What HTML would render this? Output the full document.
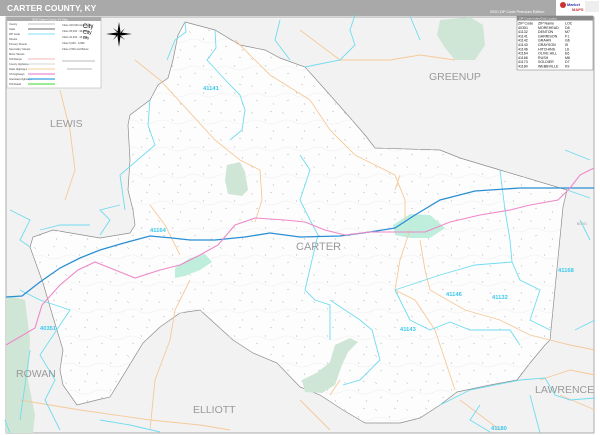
<!DOCTYPE html>
<html><head><meta charset="utf-8"><style>
html,body{margin:0;padding:0;width:600px;height:435px;overflow:hidden;background:#fff;font-family:"Liberation Sans",sans-serif}
</style></head><body>
<svg width="600" height="435" viewBox="0 0 600 435" xmlns="http://www.w3.org/2000/svg" font-family="Liberation Sans, sans-serif">
<rect width="600" height="435" fill="#fff"/>
<rect x="0" y="0" width="600" height="16" fill="#a9a9a9"/>
<text x="7" y="11" font-size="8.5" font-weight="bold" fill="#fff">CARTER COUNTY, KY</text>
<text x="490" y="13" font-size="3.8" fill="#fff">2020 ZIP Code Premium Edition</text>
<rect x="556" y="0" width="44" height="16" fill="#fff"/>
<circle cx="563" cy="5" r="3" fill="#c33"/>
<text x="567" y="6" font-size="4" fill="#33a" font-weight="bold">Market</text>
<text x="572" y="11" font-size="4" fill="#c33" font-weight="bold">MAPS</text>
<rect x="585" y="1" width="14" height="11" fill="#eee"/>
<rect x="6" y="17" width="588" height="416" fill="#f2f2f2" stroke="#999" stroke-width="0.8"/>
<path d="M6,295 L25,300 L30,340 L28,380 L35,415 L33,433 L6,433Z" fill="#cfe6d6"/>
<path d="M440,20 L470,17 L483,25 L485,45 L475,60 L455,60 L445,48 L437,35Z" fill="#cfe6d6"/>
<defs>
<path id="cty" d="M185,22 L215,30 L240,45 L265,50 L280,58 L305,67 L330,95 L352,120 L365,135 L375,148 L440,150 L460,158 L500,170 L567,190 L563,207 L550,340 L545,345 L530,363 L517,380 L490,385 L457,392 L440,405 L420,418 L400,423 L365,423 L343,410 L320,395 L300,387 L277,363 L253,353 L233,340 L200,310 L180,313 L160,327 L143,343 L110,397 L97,400 L77,405 L63,385 L60,370 L63,350 L53,317 L43,283 L30,247 L33,237 L53,230 L100,238 L130,233 L135,225 L133,210 L128,190 L130,160 L128,125 L130,115 L150,100 L158,85 L168,78 L173,60 L178,35Z"/>
<pattern id="rd" width="31" height="27" patternUnits="userSpaceOnUse">
<path d="M3,4 l2,2 M17,11 l1,2 M8,20 l2,-1 M25,22 l1,2 M22,3 l2,1" stroke="#aaa" stroke-width="0.45"/>
<path d="M0,14 q8,-4 15,0 t16,0" stroke="#eee" stroke-width="0.6" fill="none"/>
</pattern></defs>
<use href="#cty" fill="#fdfdfd" stroke="#8c8c8c" stroke-width="0.7"/>
<use href="#cty" fill="url(#rd)"/>
<path d="M227,165 L240,162 L245,172 L248,190 L242,196 L228,194 L225,180Z" fill="#cfe6d6"/>
<path d="M175,268 L190,258 L205,254 L212,262 L200,270 L185,276 L175,278Z" fill="#bfeedd"/>
<path d="M393,225 L410,214 L430,215 L445,228 L430,238 L410,238 L395,235Z" fill="#bfeedd"/>
<path d="M335,345 L350,338 L358,342 L348,352 L342,365 L335,385 L322,393 L305,392 L302,380 L318,372 L330,362Z" fill="#cfe6d6"/>
<g fill="none" stroke="#f5c99a" stroke-width="0.9">
<path d="M135,60 L160,80 L215,140 L240,160 L260,170 L262,200 L255,222"/>
<path d="M235,40 L270,75 L310,100 L330,130 L355,155 L395,175 L405,200 L405,220"/>
<path d="M300,30 L340,60 L390,60 L420,55 L455,60"/>
<path d="M410,230 L400,260 L395,290 L415,300 L435,330 L445,360 L455,390"/>
<path d="M420,240 L425,270 L430,290 L465,310 L500,320 L530,335 L570,345 L595,350"/>
<path d="M190,280 L175,310 L170,340 L155,380 L150,430"/>
<path d="M20,400 L80,410 L150,420 L200,425 L230,430"/>
<path d="M330,395 L340,380 M180,255 L165,225 L150,205"/>
<path d="M460,400 L500,430 M300,400 L330,430 M395,190 L400,175"/>
<path d="M540,380 L570,370 L595,375 M560,395 L595,410"/>
<path d="M60,90 L70,130 L75,170 L65,200"/>
</g>
<g fill="none" stroke="#6fdcf0" stroke-width="0.9">
<path d="M185,22 L186,32 L175,40 L167,60"/>
<path d="M215,30 L216,48 L207,60 L230,85 L240,95 L245,110 L242,130 L230,140"/>
<path d="M150,100 L148,125 L155,145 L120,175 L125,210"/>
<path d="M355,15 L350,30 L355,45 L340,60 L305,67"/>
<path d="M300,155 L310,170 L300,200 L310,220 L318,235 L312,260 L305,290 L315,300 L330,305 L330,340"/>
<path d="M330,300 L360,320 L372,330 L380,360 L360,380 L343,385"/>
<path d="M395,290 L440,275 L475,265 L512,262 L520,280 L540,290 L530,320 L550,330"/>
<path d="M395,290 L410,320 L430,330 L450,322 L470,330 L510,330 L520,345"/>
<path d="M500,170 L505,210 L510,240 L512,262"/>
<path d="M440,405 L470,390 L520,380 L545,378 L555,395 L570,400 L595,398"/>
<path d="M480,405 L470,420 L490,432 M530,395 L540,433"/>
<path d="M20,290 L40,300 L55,305 L70,310 L50,340 L40,355 L55,380 L45,400 L60,430"/>
<path d="M30,247 L20,240 L30,220 L10,210"/>
<path d="M100,235 L110,220 L100,210 L120,205 M40,230 L60,225 L90,225"/>
<path d="M30,350 L20,420 M5,420 L10,433 M100,420 L130,425 L160,432"/>
<path d="M280,20 L275,40 L290,60 M410,16 L420,40"/>
<path d="M567,190 L590,198 M565,150 L590,160 M580,220 L590,240 M575,330 L595,320"/>
</g>
<path d="M6,297 L22,296 L40,282 L60,268 L80,258 L100,250 L124,243 L150,236 L172,238 L190,240 L215,240 L245,237 L270,233 L300,237 L340,236 L370,232 L395,228 L415,215 L440,200 L475,191 L520,188 L560,188 L594,188" fill="none" stroke="#2a8fd4" stroke-width="1.3"/>
<path d="M6,345 L35,328 L42,305 L60,285 L78,270 L95,262 L115,270 L135,278 L160,270 L180,265 L200,255 L218,245 L235,225 L255,218 L285,220 L305,222 L325,230 L345,235 L370,232 L395,232 L425,232 L450,222 L480,215 L510,210 L530,205 L558,200 L570,188 L580,175 L594,168" fill="none" stroke="#ee88c8" stroke-width="1.1"/>
<g fill="#9a9a9a" font-size="10.5">
<text x="50" y="127">LEWIS</text>
<text x="429" y="80">GREENUP</text>
<text x="16" y="377">ROWAN</text>
<text x="193" y="413">ELLIOTT</text>
<text x="535" y="393">LAWRENCE</text>
<text x="296" y="250" font-size="11">CARTER</text>
<text x="577" y="225" font-size="3.5">BOYD</text>
</g>
<g fill="#3cc8ee" font-size="5.8" font-weight="bold">
<text x="203" y="90">41141</text>
<text x="150" y="232">41164</text>
<text x="40" y="330">40351</text>
<text x="446" y="296">41146</text>
<text x="492" y="299">41132</text>
<text x="558" y="272">41168</text>
<text x="400" y="331">41143</text>
<text x="491" y="430">41180</text>
</g>
<g fill="#000">
<path d="M119,22 L120.5,32 L119,34 L117.5,32Z M119,47 L120.5,36 L119,34 L117.5,36Z M106,34 L117,32.5 L119,34 L117,35.5Z M132,34 L121,32.5 L119,34 L121,35.5Z"/>
<path d="M113,28 L120,33 L119,34Z M125,40 L118,35 L119,34Z M125,28 L120,35 L119,34Z M113,40 L118,33 L119,34Z"/>
</g>
<rect x="7" y="17" width="94" height="71" fill="#fff" stroke="#aaa" stroke-width="0.5"/>
<rect x="7" y="17" width="94" height="4" fill="#aaa"/>
<text x="32" y="20.3" font-size="2.8" fill="#fff">2020 Carter County, KY Map</text>
<g font-size="2.6" fill="#444">
<text x="9" y="25">County</text><text x="9" y="30">State</text><text x="9" y="35">ZIP Code</text><text x="9" y="40">Streets</text><text x="9" y="45">Primary Streets</text><text x="9" y="50">Secondary Streets</text><text x="9" y="55">Minor Streets</text><text x="9" y="60">Toll Ramps</text><text x="9" y="65">County Highways</text><text x="9" y="70">State Highways</text><text x="9" y="75">US Highways</text><text x="9" y="80">Interstate Highways</text><text x="9" y="85">Toll Roads</text>
<text x="62" y="26">Cities 100,000 and Above</text><text x="62" y="32">Cities 25,000 - 99,999</text><text x="62" y="38">Cities 10,000 - 24,999</text><text x="62" y="44">Cities 5,000 - 9,999</text><text x="62" y="50">Cities 2,500 and Below</text>
</g>
<text x="83" y="28" font-size="6" fill="#111">City</text>
<text x="83" y="34" font-size="5" fill="#111">City</text>
<text x="83" y="39" font-size="3.5" fill="#111">City</text>
<g stroke-width="1.2">
<path d="M28,24 H55" stroke="#ccc"/><path d="M28,29 H55" stroke="#888"/><path d="M28,34 H55" stroke="#99e6f5"/>
<path d="M28,59 H55" stroke="#f7c6c6"/><path d="M28,64 H55" stroke="#ddd"/><path d="M28,69 H55" stroke="#f7d6a8"/>
<path d="M28,74 H55" stroke="#f08ad0"/><path d="M28,79 H55" stroke="#3aa0e0"/><path d="M28,84 H55" stroke="#66dd55"/>
</g>
<path d="M62,61 H95 M67,69 H92" stroke="#777" stroke-width="0.6"/>
<rect x="517" y="16" width="76" height="54" fill="#fff" stroke="#888" stroke-width="0.6"/>
<rect x="517" y="16" width="76" height="4.5" fill="#888"/>
<text x="519" y="19.5" font-size="3" fill="#eee">ZIP Code Index/Grid Locator</text>
<g font-size="3.6" fill="#111">
<text x="518" y="24.5">ZIP Code</text><text x="538" y="24.5">ZIP Name</text><text x="565" y="24.5">LOC</text>
<text x="518" y="28.8">40351</text><text x="538" y="28.8">MOREHEAD</text><text x="565" y="28.8">D8</text>
<text x="518" y="33.1">41132</text><text x="538" y="33.1">DENTON</text><text x="565" y="33.1">M7</text>
<text x="518" y="37.4">41141</text><text x="538" y="37.4">GARRISON</text><text x="565" y="37.4">F1</text>
<text x="518" y="41.7">41142</text><text x="538" y="41.7">GRAHN</text><text x="565" y="41.7">G6</text>
<text x="518" y="46">41143</text><text x="538" y="46">GRAYSON</text><text x="565" y="46">I5</text>
<text x="518" y="50.3">41146</text><text x="538" y="50.3">HITCHINS</text><text x="565" y="50.3">L6</text>
<text x="518" y="54.6">41164</text><text x="538" y="54.6">OLIVE HILL</text><text x="565" y="54.6">E6</text>
<text x="518" y="58.9">41166</text><text x="538" y="58.9">RUSH</text><text x="565" y="58.9">M6</text>
<text x="518" y="63.2">41173</text><text x="538" y="63.2">SOLDIER</text><text x="565" y="63.2">D7</text>
<text x="518" y="67.5">41180</text><text x="538" y="67.5">WEBBVILLE</text><text x="565" y="67.5">K9</text>
</g>
</svg>
</body></html>
